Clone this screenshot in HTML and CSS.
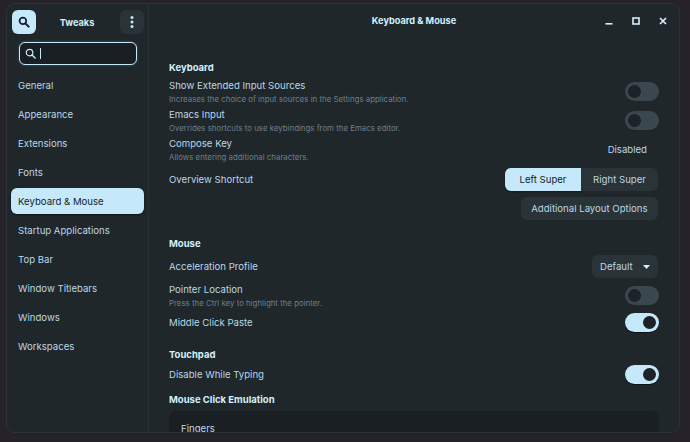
FILE: index.html
```html
<!DOCTYPE html>
<html lang="en">
<head>
<meta charset="utf-8">
<title>Tweaks</title>
<link rel="stylesheet" href="styles.css">
</head>
<body>
<div class="window">
  <aside class="sidebar">
    <header class="side-head">
      <button class="icon-btn accent" aria-label="Search">
        <svg width="12" height="12" viewBox="0 0 14 14"><circle cx="5.7" cy="5.7" r="3.9" fill="none" stroke="#16202a" stroke-width="2"/><path d="M8.6 8.6 12.4 12.4" stroke="#16202a" stroke-width="2.4" stroke-linecap="round"/></svg>
      </button>
      <span class="app-title">Tweaks</span>
      <button class="icon-btn" aria-label="Menu">
        <svg width="4" height="12" viewBox="0 0 4 12"><circle cx="2" cy="1.600" r="1.500" fill="#c5e8fb"/><circle cx="2" cy="6" r="1.500" fill="#c5e8fb"/><circle cx="2" cy="10.400" r="1.500" fill="#c5e8fb"/></svg>
      </button>
    </header>
    <div class="search">
      <svg width="11" height="11" viewBox="0 0 12 12"><circle cx="5" cy="5" r="3.6" fill="none" stroke="#c5e8fb" stroke-width="1.3"/><path d="M7.7 7.7 11 11" stroke="#c5e8fb" stroke-width="1.6" stroke-linecap="round"/></svg>
      <span class="caret"></span>
    </div>
    <nav class="nav">
      <a class="nav-item">General</a>
      <a class="nav-item">Appearance</a>
      <a class="nav-item">Extensions</a>
      <a class="nav-item">Fonts</a>
      <a class="nav-item selected">Keyboard &amp; Mouse</a>
      <a class="nav-item">Startup Applications</a>
      <a class="nav-item">Top Bar</a>
      <a class="nav-item">Window Titlebars</a>
      <a class="nav-item">Windows</a>
      <a class="nav-item">Workspaces</a>
    </nav>
  </aside>
  <main class="main">
    <header class="main-head">
      <span class="main-title">Keyboard &amp; Mouse</span>
      <div class="controls">
        <svg width="8" height="8" viewBox="0 0 8 8"><rect x="0.5" y="6" width="7" height="1.6" fill="#d5effd"/></svg>
        <svg width="8" height="8" viewBox="0 0 8 8"><rect x="1" y="1" width="6" height="6" fill="none" stroke="#d5effd" stroke-width="1.6"/></svg>
        <svg width="8" height="8" viewBox="0 0 8 8"><path d="M1 1 7 7M7 1 1 7" stroke="#d5effd" stroke-width="1.7"/></svg>
      </div>
    </header>
    <section class="content">
      <h2 class="heading first">Keyboard</h2>
      <div class="row two">
        <div><div class="label">Show Extended Input Sources</div><div class="desc">Increases the choice of input sources in the Settings application.</div></div>
        <span class="toggle"></span>
      </div>
      <div class="row two">
        <div><div class="label">Emacs Input</div><div class="desc">Overrides shortcuts to use keybindings from the Emacs editor.</div></div>
        <span class="toggle"></span>
      </div>
      <div class="row two">
        <div><div class="label">Compose Key</div><div class="desc">Allows entering additional characters.</div></div>
        <span class="value">Disabled</span>
      </div>
      <div class="row btn-row overview">
        <div class="label">Overview Shortcut</div>
        <div class="seg">
          <span class="seg-btn active">Left Super</span>
          <span class="seg-btn">Right Super</span>
        </div>
      </div>
      <div class="row btn-row layout">
        <span class="btn">Additional Layout Options</span>
      </div>
      <h2 class="heading mouse">Mouse</h2>
      <div class="row btn-row">
        <div class="label">Acceleration Profile</div>
        <span class="btn combo">Default<svg width="7" height="4" viewBox="0 0 7 4"><path d="M0 0H7L3.500 4Z" fill="#d5effd"/></svg></span>
      </div>
      <div class="row two pointer">
        <div><div class="label">Pointer Location</div><div class="desc">Press the Ctrl key to highlight the pointer.</div></div>
        <span class="toggle"></span>
      </div>
      <div class="row single middle">
        <div class="label">Middle Click Paste</div>
        <span class="toggle on"></span>
      </div>
      <h2 class="heading touchpad">Touchpad</h2>
      <div class="row single">
        <div class="label">Disable While Typing</div>
        <span class="toggle on"></span>
      </div>
      <h2 class="heading emulation">Mouse Click Emulation</h2>
      <div class="box"><div class="label">Fingers</div></div>
    </section>
  </main>
</div>
</body>
</html>
```
FILE: styles.css
```css
* { box-sizing: border-box; }
html, body { height: 100%; }
body {
  margin: 0;
  padding: 3px 10px 9px 6px;
  background: #25222a;
  font-family: Inter, "Noto Sans", sans-serif;
  font-size: 9.6px;
  color: #c9e3f1;
  overflow: hidden;
}
.window {
  display: flex;
  height: 430px;
  background: #1f272b;
  border: 1px solid #2c3439;
  border-radius: 9px;
  overflow: hidden;
}
.sidebar {
  flex: 0 0 142px;
  display: flex;
  flex-direction: column;
  border-right: 1px solid #293136;
  padding: 0 4px;
}
.side-head {
  display: flex;
  align-items: center;
  justify-content: space-between;
  height: 32px;
  padding: 4px 0 0 1px;
}
.icon-btn {
  display: flex;
  align-items: center;
  justify-content: center;
  width: 24px;
  height: 24px;
  padding: 0;
  border: 0;
  border-radius: 6px;
  background: #2a3338;
}
.icon-btn.accent { background: #c5e8fb; }
.app-title { font-weight: 700; color: #d5effd; font-size: 9.2px; margin-right: 2px; }
.search {
  display: flex;
  align-items: center;
  gap: 4px;
  width: 118px;
  height: 23px;
  margin: 6px 0 0 8px;
  padding: 0 5px;
  background: #1a1f23;
  border: 1.5px solid #c5e8fb;
  border-radius: 6px;
  box-shadow: 0 0 3px rgba(197, 232, 251, 0.25);
}
.caret { width: 1px; height: 11px; background: #c5e8fb; }
.nav {
  display: flex;
  flex-direction: column;
  gap: 3px;
  margin-top: 7px;
}
.nav-item {
  display: flex;
  align-items: center;
  height: 26px;
  padding-left: 7px;
  border-radius: 6px;
  color: #bcd7e5;
}
.nav-item.selected {
  background: #c5e8fb;
  color: #17212a;
  box-shadow: 0 1px 2px rgba(0, 0, 0, 0.5);
}
.main { flex: 1; min-width: 0; display: flex; flex-direction: column; }
.main-head {
  position: relative;
  display: flex;
  align-items: center;
  justify-content: center;
  height: 32px;
  padding-top: 1px;
  flex: none;
}
.main-title { font-weight: 700; color: #d5effd; font-size: 9.2px; }
.controls {
  position: absolute;
  right: 12px;
  top: 13px;
  display: flex;
  gap: 19px;
}
.content { padding: 0 20px; flex: none; }
.heading {
  display: flex;
  align-items: center;
  height: 14px;
  padding-top: 1px;
  margin: 0;
  font-size: 9.5px;
  font-weight: 700;
  color: #d5effd;
}
.heading.first { margin-top: 24px; margin-bottom: 3px; }
.heading.mouse { margin-top: 16px; margin-bottom: 5px; }
.heading.touchpad { margin-top: 14px; margin-bottom: 2px; }
.heading.emulation { margin-top: 7px; margin-bottom: 5px; }
.row { display: flex; align-items: center; justify-content: space-between; }
.row.two { height: 29px; }
.row.single { height: 22px; }
.row.btn-row { height: 23px; }
.row.overview { margin-top: 4px; }
.row.layout { justify-content: flex-end; margin-top: 6px; }
.row.pointer { margin-top: 3px; }
.row.middle { margin-top: 1px; }
.label { color: #bcd7e5; line-height: 13px; }
.desc { font-size: 7.87px; color: #6d7f89; line-height: 12px; margin-top: 1px; }
.value { color: #bcd7e5; margin-right: 12px; }
.toggle {
  display: flex;
  align-items: center;
  justify-content: flex-start;
  width: 34px;
  height: 19px;
  padding: 0 3px;
  border-radius: 10px;
  background: #3a474e;
}
.toggle::after {
  content: "";
  width: 13px;
  height: 13px;
  border-radius: 50%;
  background: #1c2226;
}
.toggle.on {
  justify-content: flex-end;
  background: #c5e8fb;
  box-shadow: 0 1px 0 #0e1215;
}
.seg { display: flex; margin-right: 1px; }
.seg-btn {
  display: flex;
  align-items: center;
  justify-content: center;
  width: 77px;
  height: 23px;
  background: #2a3338;
  border-radius: 0 6px 6px 0;
  color: #bcd7e5;
}
.seg-btn.active {
  width: 76px;
  background: #c5e8fb;
  color: #17212a;
  border-radius: 6px 0 0 6px;
  box-shadow: 0 1px 2px rgba(0, 0, 0, 0.4);
}
.btn {
  display: flex;
  align-items: center;
  height: 23px;
  margin-right: 1px;
  padding: 0 10.500px;
  background: #2a3338;
  border-radius: 6px;
  color: #bcd7e5;
}
.combo { gap: 10px; padding: 0 8px; width: 66px; }
.combo svg { flex: none; }
.box {
  height: 40px;
  padding: 11px 12px;
  background: #1a1f23;
  border-radius: 8px;
}
```
